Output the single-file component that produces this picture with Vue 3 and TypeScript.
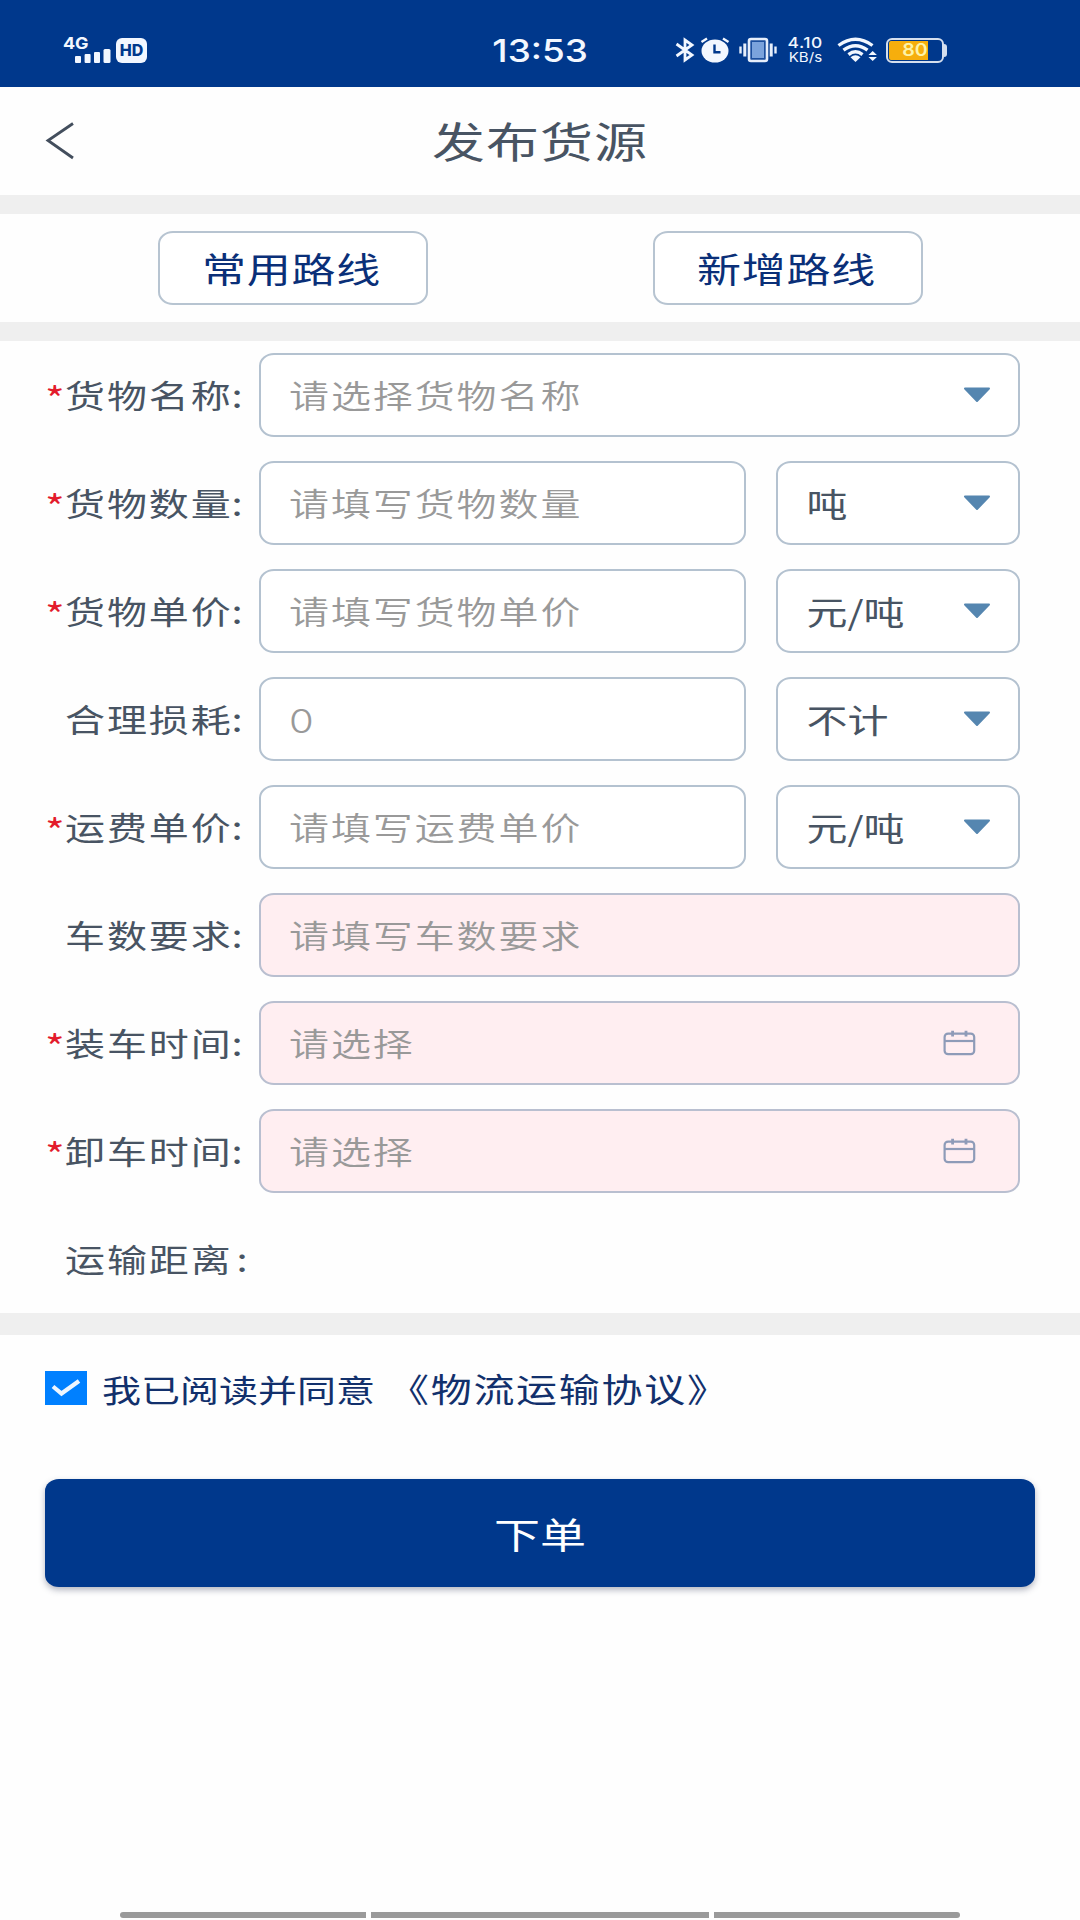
<script setup lang="ts">
import { ref } from 'vue'

interface Row {
  label: string
  required?: boolean
  text: string
  kind: 'select' | 'input' | 'date'
  unit?: string
  pink?: boolean
  digit?: boolean
}

const rows: Row[] = [
  { label: '货物名称', required: true, text: '请选择货物名称', kind: 'select' },
  { label: '货物数量', required: true, text: '请填写货物数量', kind: 'input', unit: '吨' },
  { label: '货物单价', required: true, text: '请填写货物单价', kind: 'input', unit: '元/吨' },
  { label: '合理损耗', text: '0', kind: 'input', unit: '不计', digit: true },
  { label: '运费单价', required: true, text: '请填写运费单价', kind: 'input', unit: '元/吨' },
  { label: '车数要求', text: '请填写车数要求', kind: 'input', pink: true },
  { label: '装车时间', required: true, text: '请选择', kind: 'date', pink: true },
  { label: '卸车时间', required: true, text: '请选择', kind: 'date', pink: true },
]

const agreed = ref(true)
</script>

<template>
  <div class="screen">
    <header class="status">
      <div class="side left">
        <div class="signal">
          <span class="net">4G</span>
          <svg class="bars" width="36" height="14" viewBox="0 0 36 14" fill="#f2f7ff">
            <rect x="0" y="7" width="6" height="7" rx="1" />
            <rect x="9.6" y="5" width="6" height="9" rx="1" />
            <rect x="19" y="3" width="6" height="11" rx="1" />
            <rect x="28.5" y="0" width="7" height="14" rx="1.5" />
          </svg>
        </div>
        <span class="hd"><b>HD</b></span>
      </div>
      <span class="clock">13:53</span>
      <div class="side right">
        <svg width="20" height="26" viewBox="0 0 20 26" fill="none" stroke="#f2f7ff" stroke-width="2.8">
          <path d="M1.5 7 L17 18 L10 23 V3 L17 8 L1.5 19" />
        </svg>
        <svg class="alarm" width="30" height="26" viewBox="0 0 30 26">
          <ellipse cx="15" cy="14" rx="13.5" ry="11.5" fill="#f2f7ff" />
          <path d="M1.5 5 L7 1.5 M28.5 5 L23 1.5" stroke="#f2f7ff" stroke-width="2.4" fill="none" />
          <path d="M14.5 7.5 V15.2 H20.5" stroke="#00388c" stroke-width="2.4" fill="none" />
        </svg>
        <svg class="vibrate" width="38" height="26" viewBox="0 0 38 26">
          <rect x="10" y="2" width="18" height="22" rx="2" fill="#1c4f9e" stroke="#e6eefb" stroke-width="2.6" />
          <rect x="13" y="5" width="12" height="16" fill="#7ba3dc" />
          <path d="M5.8 6.5 V19.5 M32.2 6.5 V19.5" stroke="#e6eefb" stroke-width="3" />
          <path d="M1.5 9.5 V16.5 M36.5 9.5 V16.5" stroke="#e6eefb" stroke-width="2.4" />
        </svg>
        <div class="speed"><span>4.10</span><small>KB/s</small></div>
        <svg class="wifi" width="40" height="26" viewBox="0 0 40 26">
          <g fill="none" stroke="#f2f7ff" stroke-width="3.4">
            <path d="M1.5 8.5 Q18.5 -4 35.5 8.5" />
            <path d="M6.5 13.2 Q18.5 4.2 30.5 13.2" />
            <path d="M11.5 17.6 Q18.5 12 25.5 17.6" />
          </g>
          <path d="M13.5 20.2 Q18.5 16.5 23.5 20.2 L18.5 25 Z" fill="#f2f7ff" />
          <path d="M31.5 18 L35.7 14 L39.9 18 Z M31.5 20 L35.7 24 L39.9 20 Z" fill="#f2f7ff" />
        </svg>
        <div class="battery"><i class="charge"></i><span>80</span></div>
        <i class="tip"></i>
      </div>
    </header>

    <nav class="titlebar">
      <svg class="back" width="30" height="40" viewBox="0 0 30 40" fill="none" stroke="#434e5d" stroke-width="2.8">
        <path d="M28 2.5 L3 19.5 L28 37" />
      </svg>
      <h1 class="flat">发布货源</h1>
    </nav>

    <section class="routes">
      <button class="route"><span class="flat">常用路线</span></button>
      <button class="route"><span class="flat">新增路线</span></button>
    </section>

    <section class="form">
      <div v-for="row in rows" :key="row.label" class="row">
        <div class="label">
          <span class="star flat"><template v-if="row.required">*</template></span>
          <span class="name flat">{{ row.label }}</span><span class="colon flat">:</span>
        </div>
        <div class="box" :class="{ pink: row.pink }">
          <span class="hint flat" :class="{ digit: row.digit }">{{ row.text }}</span>
          <svg v-if="row.kind === 'select'" class="arrow" width="28" height="16" viewBox="0 0 28 16">
            <path d="M2 1.5 H26 L14 14 Z" fill="#5586b0" stroke="#5586b0" stroke-width="2" stroke-linejoin="round" />
          </svg>
          <svg v-if="row.kind === 'date'" class="calendar" width="33" height="26" viewBox="0 0 33 26" fill="none" stroke="#8e9bb8" stroke-width="2.2">
            <rect x="1.6" y="3.6" width="29.6" height="20.6" rx="3.5" />
            <path d="M1.6 11 H31" />
            <path d="M9.6 .8 V6.6 M23 .8 V6.6" stroke-width="2.8" />
          </svg>
        </div>
        <div v-if="row.unit" class="box unit">
          <span class="value flat">{{ row.unit }}</span>
          <svg class="arrow" width="28" height="16" viewBox="0 0 28 16">
            <path d="M2 1.5 H26 L14 14 Z" fill="#5586b0" stroke="#5586b0" stroke-width="2" stroke-linejoin="round" />
          </svg>
        </div>
      </div>
      <div class="row">
        <div class="label">
          <span class="star"></span>
          <span class="name flat">运输距离</span><span class="colon far flat">:</span>
        </div>
      </div>
    </section>

    <section class="agree">
      <span class="check" @click="agreed = !agreed">
        <svg v-if="agreed" width="30" height="18" viewBox="0 0 30 18" fill="none" stroke="#eef6ff" stroke-width="4.2">
          <path d="M2 7.5 L10.5 14.5 L28 2" />
        </svg>
      </span>
      <span class="read flat">我已阅读并同意</span>
      <span class="terms flat">《物流运输协议》</span>
    </section>

    <button class="submit"><span class="flat">下单</span></button>

    <footer class="gesture"><i></i><i class="mid"></i><i></i></footer>
  </div>
</template>

<style>
body {
  background: #fefefe;
}
</style>

<style scoped>
.screen {
  width: 1080px;
  height: 1920px;
  display: flex;
  flex-direction: column;
  overflow: hidden;
  box-sizing: border-box;
  background: #fefefe;
  color: #485463;
  font-family: "Noto Sans CJK SC", "Noto Sans", sans-serif;
}
.screen * {
  box-sizing: border-box;
}
.flat {
  display: inline-block;
  line-height: 1;
  white-space: nowrap;
  transform: scaleY(0.8);
  transform-origin: 50% 48%;
}
button {
  font-family: inherit;
  padding: 0;
}

.status {
  height: 87px;
  flex: none;
  display: grid;
  grid-template-columns: 480px 120px 480px;
  align-items: center;
  padding-top: 13px;
  background: #00388c;
  color: #f2f7ff;
  font-family: Inter, sans-serif;
}
.side {
  display: flex;
  align-items: center;
}
.left {
  padding-left: 63px;
}
.signal {
  width: 48px;
  height: 25px;
  display: flex;
  flex-direction: column;
  justify-content: space-between;
}
.net {
  font-size: 16px;
  line-height: 11px;
  font-weight: 700;
  transform: scaleX(1.12);
  transform-origin: left;
}
.bars {
  margin-left: 12px;
  flex: none;
  margin-top: -2px;
}
.hd {
  width: 31px;
  height: 25px;
  margin-left: 5px;
  display: flex;
  align-items: center;
  justify-content: center;
  border-radius: 6px;
  background: #f2f7ff;
  color: #00388c;
}
.hd b {
  font-size: 16px;
  line-height: 1;
  font-weight: 800;
}
.clock {
  justify-self: center;
  font-size: 31px;
  line-height: 1;
  font-weight: 500;
  transform: scaleX(1.19);
}
.right {
  padding-left: 75px;
}
.right > * {
  flex: none;
}
.alarm {
  margin-left: 5px;
}
.vibrate {
  margin-left: 9px;
}
.speed {
  width: 38px;
  height: 28px;
  margin-left: 9px;
  display: flex;
  flex-direction: column;
  align-items: center;
  justify-content: space-between;
}
.speed span {
  font-size: 15px;
  line-height: 13px;
  font-weight: 500;
  letter-spacing: 0.5px;
  transform: scaleX(1.16);
}
.speed small {
  font-size: 13px;
  line-height: 13px;
  transform: scaleX(1.16);
}
.wifi {
  margin-left: 13px;
}
.battery {
  width: 58px;
  height: 25px;
  margin-left: 9px;
  position: relative;
  display: flex;
  border: 2.5px solid #d5dfee;
  border-radius: 6px;
  padding: 1px;
}
.charge {
  width: 39px;
  background: #f6ae0c;
  border-radius: 2px 0 0 2px;
}
.battery span {
  position: absolute;
  left: 16px;
  top: 1px;
  font-size: 17px;
  line-height: 18px;
  font-weight: 600;
  color: #fdf3a8;
  transform: scaleX(1.15);
}
.tip {
  width: 3px;
  height: 13px;
  background: #d5dfee;
  border-radius: 0 3px 3px 0;
}

.titlebar {
  height: 127px;
  flex: none;
  display: grid;
  grid-template-columns: 120px 1fr 120px;
  align-items: center;
  border-bottom: 19px solid #efefef;
}
.back {
  margin-left: 45px;
}
.titlebar h1 {
  margin: -2px 0 0;
  justify-self: center;
  font-size: 53px;
  letter-spacing: 1px;
  font-weight: 400;
}

.routes {
  height: 127px;
  flex: none;
  display: flex;
  justify-content: space-between;
  padding: 17px 157px 0 158px;
  border-bottom: 19px solid #efefef;
}
.route {
  width: 270px;
  height: 74px;
  border: 2px solid #b7c4d1;
  border-radius: 15px / 13px;
  background: #fff;
  color: #0a2f78;
  font-size: 44px;
  letter-spacing: 0.7px;
}
.route .flat {
  margin: -2px 0 0 -3px;
}

.form {
  height: 994px;
  flex: none;
  display: flex;
  flex-direction: column;
  gap: 24px;
  padding: 12px 60px 0 46px;
  border-bottom: 22px solid #efefef;
}
.row {
  height: 84px;
  flex: none;
  display: flex;
  align-items: center;
}
.label {
  width: 213px;
  flex: none;
  display: flex;
  align-items: center;
  font-size: 40px;
}
.star {
  width: 19px;
  margin: 5px 1px 0 -1px;
  color: #e31b2b;
  font-size: 42px;
}
.name {
  letter-spacing: 1.9px;
}
.colon {
  margin-left: -1px;
}
.far {
  margin-left: 4px;
}
.box {
  flex: 1;
  height: 84px;
  display: flex;
  align-items: center;
  border: 2px solid #b4c2d0;
  border-radius: 15px / 13px;
  background: #fff;
}
.pink {
  background: #ffeef1;
  border-color: #b9bfd0;
}
.hint {
  flex: 1;
  padding-left: 28px;
  color: #999;
  font-size: 40px;
  font-weight: 350;
  letter-spacing: 1.9px;
}
.digit {
  font-family: Inter, sans-serif;
  margin-top: 5px;
}
.unit {
  flex: none;
  width: 244px;
  margin-left: 30px;
}
.value {
  flex: 1;
  padding-left: 28.5px;
  font-size: 41px;
}
.arrow {
  flex: none;
  margin-right: 27px;
}
.calendar {
  flex: none;
  margin-right: 42px;
}

.agree {
  height: 108px;
  flex: none;
  display: flex;
  align-items: center;
  padding: 0 0 2px 45px;
  color: #12306c;
}
.check {
  width: 42px;
  height: 34px;
  display: flex;
  align-items: center;
  justify-content: center;
  background: #0080ff;
}
.read {
  margin-left: 15px;
  font-size: 39px;
}
.terms {
  margin-left: 13px;
  font-size: 41px;
  letter-spacing: 1.7px;
}

.submit {
  width: 990px;
  height: 108px;
  flex: none;
  margin: 36px 0 0 45px;
  border: 0;
  border-radius: 14px / 12px;
  background: #00388c;
  box-shadow: 0 3px 6px rgba(40, 50, 80, 0.35);
  color: #fff;
  font-size: 46px;
}

.gesture {
  margin: auto 120px 2px;
  height: 6px;
  flex: none;
  display: flex;
  gap: 5px;
}
.gesture i {
  width: 246px;
  border-radius: 3px 0 0 3px;
  background: #9a9a9a;
}
.gesture i:last-child {
  border-radius: 0 3px 3px 0;
}
.gesture .mid {
  flex: 1;
  border-radius: 0;
}
</style>
